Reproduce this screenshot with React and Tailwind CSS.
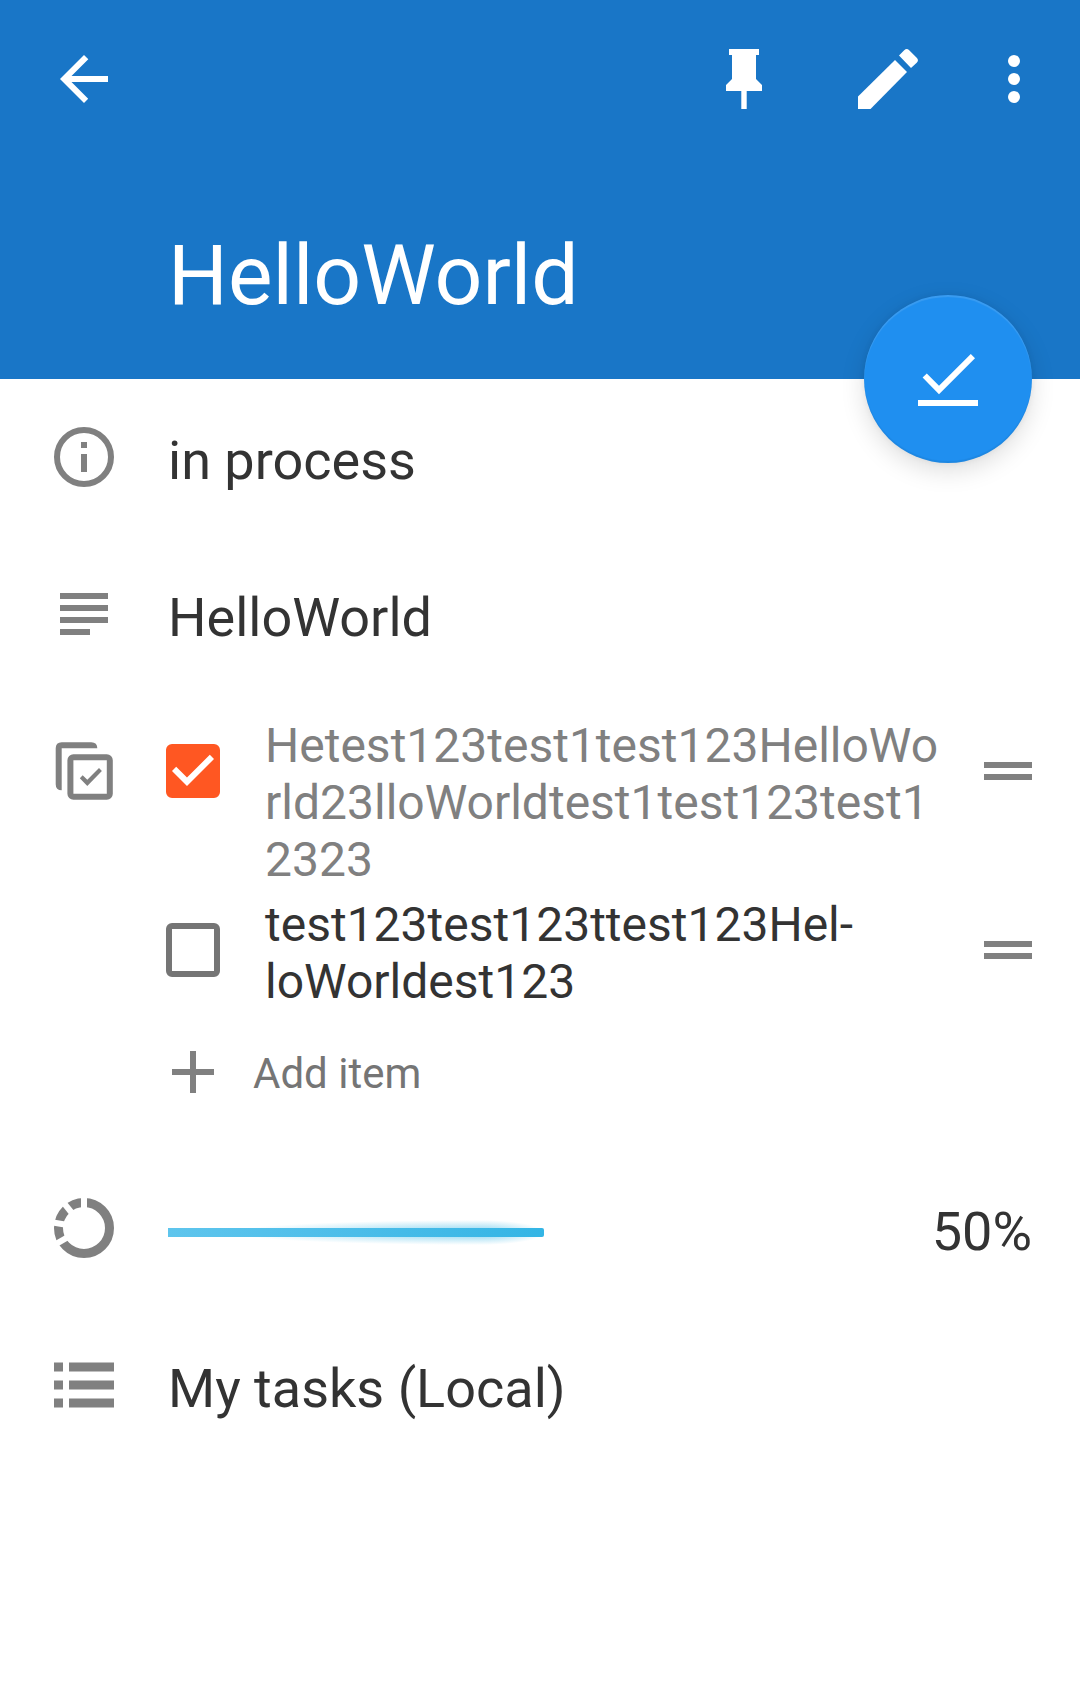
import { useState } from "react";

function Icon({ children }) {
  return (
    <svg viewBox="0 0 72 72" className="size-[72px] shrink-0" fill="currentColor" aria-hidden="true">
      {children}
    </svg>
  );
}

const BackIcon = () => (
  <Icon>
    <path d="M60 33H23.5l16.8-16.8L36 12 12 36l24 24 4.2-4.2L23.5 39H60z" />
  </Icon>
);

const PinIcon = () => (
  <Icon>
    <path d="M21 6h30v6h-3v24l6 6v6H38.7v18h-5.4V48H18v-6l6-6V12h-3z" />
  </Icon>
);

const EditIcon = () => (
  <Icon>
    <path d="M6 53.5V66h12.5L55 29 43 17z" />
    <path d="M47 12.5l5.2-5.2q2.5-2.5 5 0l7.5 7.5q2.5 2.5 0 5L59 25z" />
  </Icon>
);

const MoreIcon = () => (
  <Icon>
    <circle cx="36" cy="18" r="6" />
    <circle cx="36" cy="36" r="6" />
    <circle cx="36" cy="54" r="6" />
  </Icon>
);

const DoneIcon = () => (
  <Icon>
    <path d="M10.6 34.6l4.2-4.2L27 42.8l31.8-31.7 4.2 4.2-36 36z" />
    <path d="M6 57h60v6H6z" />
  </Icon>
);

const InfoIcon = () => (
  <Icon>
    <circle cx="36" cy="36" r="27" fill="none" stroke="currentColor" strokeWidth="6" />
    <path d="M33 21h6v6h-6zM33 33h6v18h-6z" />
  </Icon>
);

const NotesIcon = () => (
  <Icon>
    <path d="M12 15h48v6H12zM12 27h48v6H12zM12 39h48v6H12zM12 51h30v6H12z" />
  </Icon>
);

const ChecklistIcon = () => (
  <Icon>
    <path d="M49.3 13.3H13.7v42q-6 0-6-6v-36q0-6 6-6h29.6q6 0 6 6z" />
    <rect x="22.4" y="22.2" width="39.4" height="39.5" rx="3" fill="none" stroke="currentColor" strokeWidth="6" />
    <path d="M31.8 43.3l2.9-3 4.6 4.5L51 33l2.9 3-14.6 15z" />
  </Icon>
);

const RingIcon = () => (
  <Icon>
    <circle cx="36" cy="36" r="25.5" fill="none" stroke="currentColor" strokeWidth="9" />
    <g stroke="white" strokeWidth="6">
      <path d="M36 18V3" />
      <path d="M24.7 22L15.3 10.3" />
      <path d="M18.3 32.8L3.5 30.2" />
      <path d="M20.3 44.9L7.3 52.3" />
    </g>
  </Icon>
);

const ListIcon = () => (
  <Icon>
    <path d="M6 13.5h9v9H6zM21 13.5h45v9H21zM6 31.5h9v9H6zM21 31.5h45v9H21zM6 49.5h9v9H6zM21 49.5h45v9H21z" />
  </Icon>
);

const HandleIcon = () => (
  <Icon>
    <path d="M12 27h48v6H12zM12 39h48v6H12z" />
  </Icon>
);

const PlusIcon = () => (
  <Icon>
    <path d="M33 15h6v18h18v6H39v18h-6V39H15v-6h18z" />
  </Icon>
);

function Row({ icon, children }) {
  return (
    <section className="flex items-start gap-12 px-12 text-[54px] leading-[80px]">
      <span className="text-[#808080]">{icon}</span>
      {children}
    </section>
  );
}

function ChecklistItem({ item, onToggle }) {
  return (
    <li className="flex items-start">
      <label className="flex min-w-0 flex-1 items-start gap-[45px]">
        <span className="mt-[27px] grid shrink-0">
          <input
            type="checkbox"
            checked={item.done}
            onChange={onToggle}
            className="col-start-1 row-start-1 size-[54px] appearance-none rounded-md border-6 border-[#757575] checked:border-[#ff5722] checked:bg-[#ff5722]"
          />
          {item.done && (
            <svg viewBox="0 0 54 54" className="pointer-events-none col-start-1 row-start-1 size-[54px]" fill="white" aria-hidden="true">
              <path d="M6 27l4.2-4.2L21 33.5 43.8 10.8 48 15 21 42z" />
            </svg>
          )}
        </span>
        <span
          className={
            item.done
              ? "min-w-0 flex-1 break-words text-[#808080]"
              : "min-w-0 flex-1 break-words text-[#333333]"
          }
        >
          {item.text}
        </span>
      </label>
      <button type="button" aria-label="Reorder item" className="mt-[18px] ml-7 text-[#808080]">
        <HandleIcon />
      </button>
    </li>
  );
}

function ProgressBar({ value }) {
  return (
    <div
      role="progressbar"
      aria-label="Progress"
      aria-valuenow={value}
      aria-valuemin={0}
      aria-valuemax={100}
      className="flex-1"
    >
      <div className="relative h-[9px]" style={{ width: `${value}%` }}>
        <div className="absolute -inset-y-2 right-0 flex w-full">
          <div className="w-5/6 bg-[radial-gradient(ellipse_80%_50%_at_100%_50%,rgba(51,181,229,0.6),rgba(51,181,229,0.3)_50%,transparent)]" />
          <div className="w-1/6 bg-[radial-gradient(ellipse_100%_50%_at_0%_50%,rgba(51,181,229,0.6),rgba(51,181,229,0.3)_50%,transparent)]" />
        </div>
        <div className="relative h-full rounded-r-xs bg-linear-to-r from-[#5ec5ed] to-[#33b5e5]" />
      </div>
    </div>
  );
}

export default function App() {
  const [items, setItems] = useState([
    { id: 1, done: true, text: "Hetest123test1test123HelloWorld23lloWorldtest1test123test12323" },
    { id: 2, done: false, text: "test123test123ttest123Hel\u00adloWorldest123" },
  ]);
  const progress = 50;
  const toggle = (id) =>
    setItems(items.map((i) => (i.id === id ? { ...i, done: !i.done } : i)));

  return (
    <div className="min-h-screen bg-white font-[Roboto,sans-serif] text-[#333333]">
      <header className="relative bg-[#1976c7] pb-[53px] text-white">
        <nav className="flex items-center pt-[43px] pr-[30px] pl-12">
          <button type="button" aria-label="Back" className="mr-auto">
            <BackIcon />
          </button>
          <button type="button" aria-label="Pin" className="mr-[72px]">
            <PinIcon />
          </button>
          <button type="button" aria-label="Edit" className="mr-[54px]">
            <EditIcon />
          </button>
          <button type="button" aria-label="More options">
            <MoreIcon />
          </button>
        </nav>
        <h1 className="mt-[111px] pl-[168px] text-[84px] leading-[100px]">HelloWorld</h1>
        <button
          type="button"
          aria-label="Complete task"
          className="absolute right-12 -bottom-[84px] flex size-[168px] items-center justify-center rounded-full bg-[#1f8ff0] shadow-[0_8px_24px_rgba(0,0,0,0.13),0_0_6px_rgba(0,0,0,0.06),inset_0_2px_1px_rgba(255,255,255,0.12),inset_0_-2px_1px_rgba(0,0,0,0.06)]"
        >
          <DoneIcon />
        </button>
      </header>

      <main className="pt-[42px]">
        <Row icon={<InfoIcon />}>
          <p>in process</p>
        </Row>

        <div className="mt-[77px]">
          <Row icon={<NotesIcon />}>
            <p>HelloWorld</p>
          </Row>
        </div>

        <section className="mt-[59px] flex items-start pr-9 pl-12">
          <span className="mt-[18px] text-[#808080]">
            <ChecklistIcon />
          </span>
          <div className="ml-[46px] min-w-0 flex-1">
            <ul className="flex flex-col gap-2 text-[48px] leading-[57px]">
              {items.map((item) => (
                <ChecklistItem key={item.id} item={item} onToggle={() => toggle(item.id)} />
              ))}
            </ul>
            <button
              type="button"
              className="mt-[26px] -ml-[9px] flex items-start gap-6 text-[42px] leading-[76px] text-[#757575]"
            >
              <span className="text-[#808080]">
                <PlusIcon />
              </span>
              Add item
            </button>
          </div>
        </section>

        <div className="mt-20">
          <Row icon={<RingIcon />}>
            <div className="flex flex-1 items-center gap-3">
              <ProgressBar value={progress} />
              <span>{progress}%</span>
            </div>
          </Row>
        </div>

        <div className="mt-[77px]">
          <Row icon={<ListIcon />}>
            <p>My tasks (Local)</p>
          </Row>
        </div>
      </main>
    </div>
  );
}
